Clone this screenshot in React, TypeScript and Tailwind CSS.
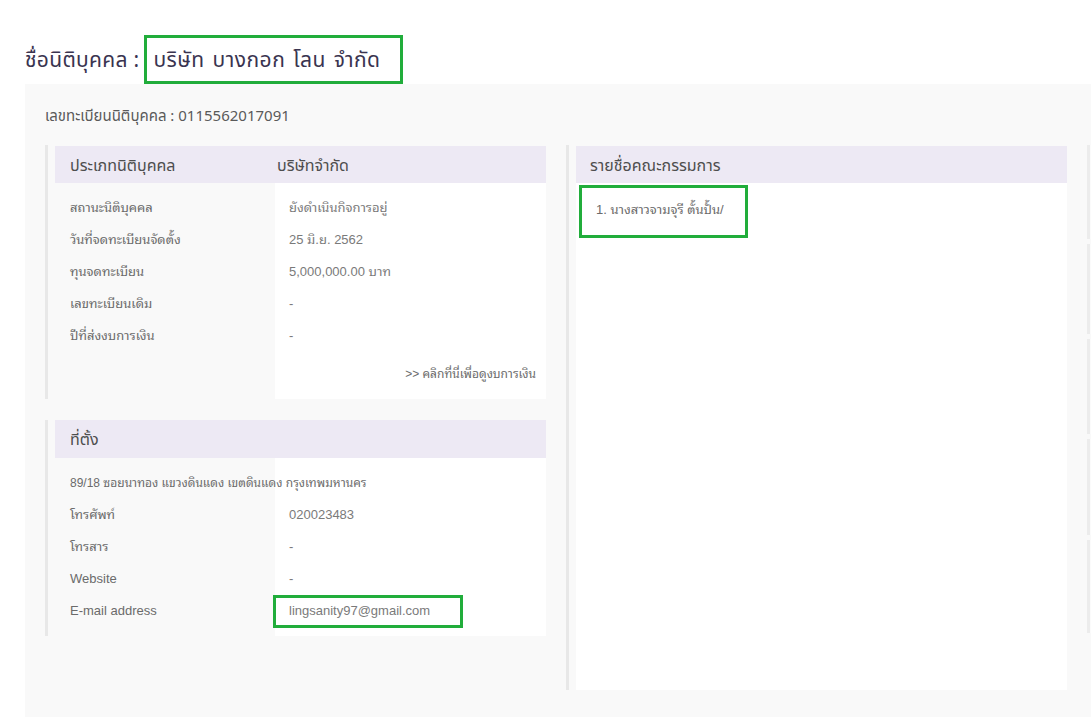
import React from "react";

const sans = { fontFamily: '"Noto Sans", "Noto Sans Thai", "Liberation Sans", sans-serif' };
const body = {
  fontFamily:
    'Tahoma, "Liberation Sans", "Noto Sans Thai Looped", "Noto Sans Thai", "Noto Sans", sans-serif',
};

type Row = { label: string; value: string };

const companyRows: Row[] = [
  { label: "สถานะนิติบุคคล", value: "ยังดำเนินกิจการอยู่" },
  { label: "วันที่จดทะเบียนจัดตั้ง", value: "25 มิ.ย. 2562" },
  { label: "ทุนจดทะเบียน", value: "5,000,000.00 บาท" },
  { label: "เลขทะเบียนเดิม", value: "-" },
  { label: "ปีที่ส่งงบการเงิน", value: "-" },
];

const contactRows: Row[] = [
  { label: "โทรศัพท์", value: "020023483" },
  { label: "โทรสาร", value: "-" },
  { label: "Website", value: "-" },
];

function InfoRow({ label, value }: Row) {
  return (
    <div className="flex h-[32px] items-center text-[13px]" style={body}>
      <div className="w-[220px] pl-[15px] text-[#6b6b6b]">{label}</div>
      <div className="flex-1 pl-[14px] text-[#7a7a7a]">{value}</div>
    </div>
  );
}

export default function App() {
  return (
    <div className="h-[717px] w-[1091px] overflow-hidden bg-white" style={sans}>
      {/* page title */}
      <div className="flex h-[84px] items-end pl-[25px]">
        <div className="flex h-[49px] items-center text-[21px] text-[#3a3450]">
          <span className="tracking-[0.3px]">ชื่อนิติบุคคล :</span>
          <span className="ml-[5px] flex h-[49px] w-[259px] items-center border-[3px] border-[#21ad3b] pl-[6px] tracking-[0.5px] [word-spacing:2px]">
            บริษัท บางกอก โลน จำกัด
          </span>
        </div>
      </div>

      {/* detail panel */}
      <div className="ml-[25px] h-[700px] w-[1300px] bg-[#f9f9f9] pl-[20px]">
        <div className="flex h-[59px] items-center pt-[3px] text-[15px] text-[#5a5a5a]">
          เลขทะเบียนนิติบุคคล : 0115562017091
        </div>

        <div className="mt-[2px] flex gap-[20px]">
          {/* left column */}
          <div className="flex w-[501px] shrink-0 flex-col gap-[21px]">
            <div className="border-l-[3px] border-[#e8e8e8] pl-[7px] pt-[1px]">
              <div className="flex h-[37px] items-center bg-[#ede9f4] text-[16px] text-[#4e4e4e]">
                <div className="w-[207px] pl-[15px]">ประเภทนิติบุคคล</div>
                <div className="pl-[15px]">บริษัทจำกัด</div>
              </div>
              <div className="relative">
                <div className="absolute inset-y-0 left-[220px] right-0 bg-white" />
                <div className="relative flex flex-col pb-[13px] pt-[9px]">
                  {companyRows.map((r) => (
                    <InfoRow key={r.label} {...r} />
                  ))}
                  <div
                    className="mt-[10px] flex h-[24px] items-center justify-end pr-[10px] text-[12px] text-[#6b6b6b]"
                    style={body}
                  >
                    &gt;&gt; คลิกที่นี่เพื่อดูงบการเงิน
                  </div>
                </div>
              </div>
            </div>

            <div className="border-l-[3px] border-[#e8e8e8] pl-[7px]">
              <div className="flex h-[38px] items-center bg-[#ede9f4] pl-[15px] text-[16px] text-[#4e4e4e]">
                ที่ตั้ง
              </div>
              <div className="relative">
                <div className="absolute inset-y-0 left-[220px] right-0 bg-white" />
                <div className="relative flex flex-col pb-[9px] pt-[9px]">
                  <div
                    className="flex h-[32px] items-center pl-[15px] text-[12px] text-[#6b6b6b]"
                    style={body}
                  >
                    89/18 ซอยนาทอง แขวงดินแดง เขตดินแดง กรุงเทพมหานคร
                  </div>
                  {contactRows.map((r) => (
                    <InfoRow key={r.label} {...r} />
                  ))}
                  <div className="flex h-[32px] items-center text-[13px]" style={body}>
                    <div className="w-[220px] pl-[15px] text-[#6b6b6b]">E-mail address</div>
                    <div className="-ml-[2px] flex h-[33px] w-[190px] items-center border-[3px] border-[#21ad3b] pl-[13px] text-[#7a7a7a]">
                      lingsanity97@gmail.com
                    </div>
                  </div>
                </div>
              </div>
            </div>
          </div>

          {/* directors column */}
          <div className="flex h-[545px] w-[501px] shrink-0 flex-col border-l-[3px] border-[#e8e8e8] pl-[7px] pt-[1px]">
            <div className="flex h-[37px] shrink-0 items-center bg-[#ede9f4] pl-[14px] text-[16px] text-[#4e4e4e]">
              รายชื่อคณะกรรมการ
            </div>
            <div className="flex-1 bg-white pl-[3px] pt-[2px]">
              <div
                className="h-[53px] w-[169px] border-[3px] border-[#21ad3b] pl-[14px] pt-[12px] text-[13px] text-[#6b6b6b]"
                style={body}
              >
                1. นางสาวจามจุรี ตั้นปั้น/
              </div>
            </div>
          </div>

          {/* next column, mostly off screen */}
          <div className="flex w-[300px] shrink-0 flex-col gap-[5px]">
            <div className="h-[94px] border-l-[3px] border-[#ececec] bg-[#fbfbfb]" />
            <div className="h-[90px] border-l-[3px] border-[#ececec] bg-[#fbfbfb]" />
            <div className="h-[95px] border-l-[3px] border-[#ececec] bg-[#fbfbfb]" />
            <div className="h-[96px] border-l-[3px] border-[#ececec] bg-[#fbfbfb]" />
            <div className="h-[93px] border-l-[3px] border-[#ececec] bg-[#fbfbfb]" />
          </div>
        </div>
      </div>
    </div>
  );
}
